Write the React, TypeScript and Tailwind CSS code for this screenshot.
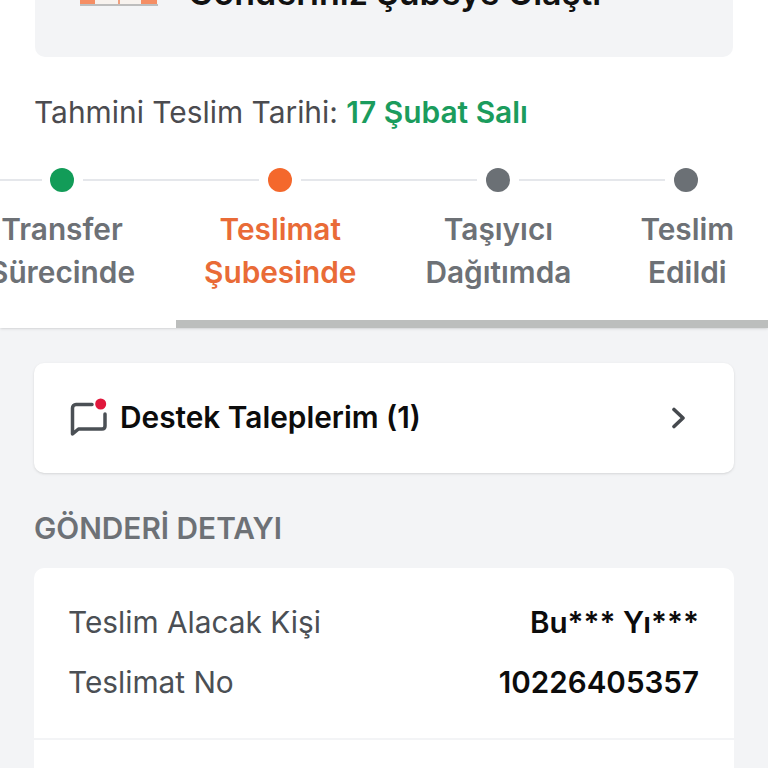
const steps = [
  { top: 'Transfer', bottom: 'Sürecinde', active: false },
  { top: 'Teslimat', bottom: 'Şubesinde', active: true },
  { top: 'Taşıyıcı', bottom: 'Dağıtımda', active: false },
  { top: 'Teslim', bottom: 'Edildi', active: false },
]

function Connector({ className }: { className: string }) {
  return <div className={`h-[2px] bg-[#e5e7eb] ${className}`} />
}

function Dot({ color }: { color: string }) {
  return <div className={`h-6 w-6 shrink-0 rounded-full ${color}`} />
}

function BranchIcon() {
  return (
    <svg width="78" height="6" viewBox="0 0 78 6" className="shrink-0">
      <rect x="0" y="0" width="78" height="4" fill="#f7f2ee" />
      <rect x="0" y="0" width="15" height="4" fill="#f58e64" />
      <rect x="38" y="0" width="2" height="4" fill="#f0a07e" />
      <rect x="61" y="0" width="16" height="4" fill="#f58e64" />
      <rect x="0" y="4" width="78" height="2" fill="#bdbdbd" />
    </svg>
  )
}

function SupportIcon() {
  return (
    <svg width="40" height="40" viewBox="0 0 40 40" fill="none">
      <path
        d="M23 6.5H7C5 6.5 3.5 8 3.5 10V36L9.5 31H33C35 31 36 30 36 28V16"
        stroke="#4b5055"
        strokeWidth="3.5"
        strokeLinecap="round"
        strokeLinejoin="round"
      />
      <circle cx="31.7" cy="6" r="5.5" fill="#e0173c" />
    </svg>
  )
}

function Chevron() {
  return (
    <svg width="16" height="22" viewBox="0 0 16 22" fill="none">
      <path d="M3 2.5L12 11L3 19.5" stroke="#45494e" strokeWidth="3.6" strokeLinecap="round" strokeLinejoin="round" />
    </svg>
  )
}

export default function App() {
  return (
    <div className="h-[768px] w-[768px] overflow-hidden bg-[#f3f4f6] font-['Inter','Noto_Sans',sans-serif]">
      <div className="h-[328px] bg-white shadow-sm">
        <div className="mx-[35px] h-[57px] overflow-hidden rounded-b-[10px] bg-[#f3f4f6]">
          <div className="-mt-[30px] flex items-end gap-[30px] pl-[45px]">
            <div className="pb-[10px]">
              <BranchIcon />
            </div>
            <p className="text-[34px] leading-[46px] font-semibold whitespace-nowrap text-[#111]">Gönderiniz Şubeye Ulaştı</p>
          </div>
        </div>

        <p className="mt-[37px] ml-[34px] text-[29.9px] leading-[36px] text-[#4b4b4f]">
          Tahmini Teslim Tarihi: <span className="font-semibold text-[#1b9c5d]">17 Şubat Salı</span>
        </p>

        <div className="mt-[38px] flex items-center">
          <Connector className="w-[42px]" />
          <div className="ml-2"><Dot color="bg-[#129c58]" /></div>
          <Connector className="mx-[9px] w-[176px]" />
          <Dot color="bg-[#f4682c]" />
          <Connector className="mx-[9px] w-[176px]" />
          <Dot color="bg-[#6b7075]" />
          <Connector className="mx-[9px] w-[146px]" />
          <Dot color="bg-[#6b7075]" />
        </div>

        <div className="-ml-[11px] mt-[16px] flex gap-[69px]">
          {steps.map((step) => (
            <div
              key={step.top}
              className={`shrink-0 text-center text-[29.8px] leading-[43px] font-semibold ${
                step.active ? 'text-[#e96b37]' : 'text-[#6d7176]'
              }`}
            >
              <div>{step.top}</div>
              <div>{step.bottom}</div>
            </div>
          ))}
        </div>

        <div className="mt-[26px] ml-[176px] h-2 bg-[#bcbebd]" />
      </div>

      <div className="px-[34px] pt-[35px]">
        <div className="flex h-[110px] items-center rounded-[10px] bg-white pr-[47px] pl-[35px] shadow-sm">
          <SupportIcon />
          <span className="ml-[11px] -mt-[2px] flex-1 text-[29.8px] font-semibold text-[#0c0c0c]">Destek Taleplerim (1)</span>
          <Chevron />
        </div>

        <h2 className="mt-[36px] text-[29.8px] leading-[38px] font-semibold text-[#6d7176]">GÖNDERİ DETAYI</h2>

        <div className="mt-[21px] rounded-[10px] bg-white">
          <div className="border-b-2 border-[#f3f4f6] pt-[24px] pr-[35px] pb-[26px] pl-[35px]">
            <div className="flex h-[60px] items-center justify-between text-[29.8px]">
              <span className="-ml-px text-[#4b4f54]">Teslim Alacak Kişi</span>
              <span className="text-[29.6px] font-semibold text-[#0c0c0c]">Bu*** Yı***</span>
            </div>
            <div className="flex h-[60px] items-center justify-between text-[29.8px]">
              <span className="-ml-px text-[#4b4f54]">Teslimat No</span>
              <span className="text-[29.6px] font-semibold text-[#0c0c0c]">10226405357</span>
            </div>
          </div>
          <div className="h-[60px]" />
        </div>
      </div>
    </div>
  )
}
